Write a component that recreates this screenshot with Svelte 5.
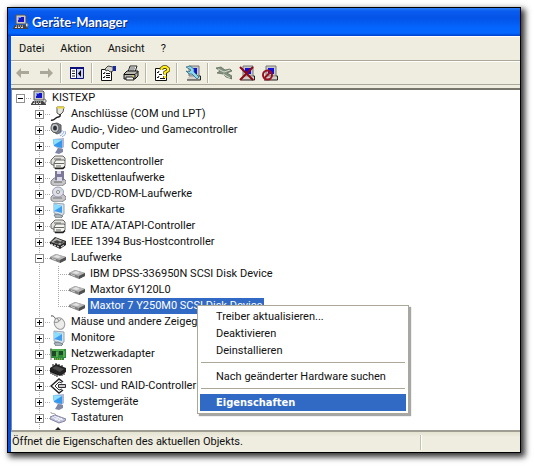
<script>
    const menus = ['Datei', 'Aktion', 'Ansicht', '?']
    const tools = [
        { icon: 'back', title: 'Zurück', disabled: true },
        { icon: 'forward', title: 'Vorwärts', disabled: true },
        null,
        { icon: 'pane', title: 'Konsolenstruktur' },
        null,
        { icon: 'properties', title: 'Eigenschaften' },
        { icon: 'print', title: 'Drucken' },
        null,
        { icon: 'help', title: 'Hilfe' },
        null,
        { icon: 'scan', title: 'Nach geänderter Hardware suchen' },
        null,
        { icon: 'update', title: 'Treiber aktualisieren' },
        { icon: 'uninstall', title: 'Deinstallieren' },
        { icon: 'disable', title: 'Deaktivieren' }
    ]
    const devices = [
        { name: 'Anschlüsse (COM und LPT)', icon: 'port' },
        { name: 'Audio-, Video- und Gamecontroller', icon: 'audio' },
        { name: 'Computer', icon: 'computer' },
        { name: 'Diskettencontroller', icon: 'controller' },
        { name: 'Diskettenlaufwerke', icon: 'floppy' },
        { name: 'DVD/CD-ROM-Laufwerke', icon: 'cdrom' },
        { name: 'Grafikkarte', icon: 'display' },
        { name: 'IDE ATA/ATAPI-Controller', icon: 'controller' },
        { name: 'IEEE 1394 Bus-Hostcontroller', icon: 'firewire' },
        {
            name: 'Laufwerke',
            icon: 'disk',
            children: ['IBM DPSS-336950N SCSI Disk Device', 'Maxtor 6Y120L0', 'Maxtor 7 Y250M0 SCSI Disk Device']
        },
        { name: 'Mäuse und andere Zeigegeräte', icon: 'mouse' },
        { name: 'Monitore', icon: 'display' },
        { name: 'Netzwerkadapter', icon: 'network' },
        { name: 'Prozessoren', icon: 'cpu' },
        { name: 'SCSI- und RAID-Controller', icon: 'scsi' },
        { name: 'Systemgeräte', icon: 'computer' },
        { name: 'Tastaturen', icon: 'keyboard' },
        { name: '', icon: 'usb' }
    ]
    const actions = [
        'Treiber aktualisieren...',
        'Deaktivieren',
        'Deinstallieren',
        null,
        'Nach geänderter Hardware suchen',
        null,
        'Eigenschaften'
    ]
    let open = $state({ KISTEXP: true, Laufwerke: true })
    let selected = $state('Maxtor 7 Y250M0 SCSI Disk Device')

    function toggle(name) {
        open[name] = !open[name]
    }
</script>

{#snippet pc()}
    <path d="M3 1h9l1 1v8H3z" fill="#c9c9c9" stroke="#555" />
    <path d="M5 3h6v5H5z" fill="#1414c8" />
    <path d="M5 3h3v1H6v2H5z" fill="#6d8bff" />
    <path d="M2 11h10l3 3v1H0v-1z" fill="#444" />
    <path d="M3 12h1m1 0h1m1 0h1m1 0h1M2 13.500h2m1 0h2m1 0h2" stroke="#ddd" />
    <path d="M13 9l2 1v2l-2 1" fill="#ddd" stroke="#777" />
{/snippet}

{#snippet monitor()}
    <path d="M4 1l10 1v10l-3 2-7-3z" fill="#d7e1e8" stroke="#93a4b2" />
    <path d="M4 2l8 2v7L4 9z" fill="#3e9df0" />
    <path d="M4 2l8 2-8 5z" fill="#8edcff" />
    <path d="M4 13l4-1 5 2-2 2H6z" fill="#aeb7bd" stroke="#76838d" />
{/snippet}

{#snippet toolPc()}
    <path d="M4 1h10v10H4z" fill="#c8c8c8" stroke="#777" />
    <path d="M6 3h6v6H6z" fill="#1010d8" />
    <path d="M3 12h12v3H2z" fill="#d4d0c8" />
    <path d="M2 15h13.500v-4H14" fill="none" stroke="#222" />
{/snippet}

{#snippet icon(name)}
    <svg class="icon" viewBox="0 0 16 16" width="16" height="16" aria-hidden="true">
        {#if name === 'pc'}
            {@render pc()}
        {:else if name === 'back'}
            <path d="M1 8l5-5v3h8v3H6v4z" fill="#aca899" />
        {:else if name === 'forward'}
            <path d="M15 8l-5-5v3H2v3h8v4z" fill="#aca899" />
        {:else if name === 'pane'}
            <path d="M1.500 2.500h13v11h-13z" fill="#fff" stroke="#10107c" />
            <path d="M1 2h14v2H1zM7 3h1v11H7z" fill="#10107c" />
            <path d="M3 6h3M3 8.500h3M3 11h3" stroke="#222" />
            <path d="M8 4h6v9H8z" fill="#c9d3ee" />
            <path d="M12 5v7l-3-3.500z" fill="#000" />
        {:else if name === 'properties'}
            <path d="M1.500 4.500h10v11h-10z" fill="#fff" stroke="#111" />
            <path d="M3 8l1 1 1-2M3 12l1 1 1-2M6 8.500h4M6 10.500h4M6 12.500h4" stroke="#111" fill="none" />
            <path d="M5 4l3-3 5 1v4l-3 1-2-2-2 1z" fill="#d2d2c8" stroke="#444" />
            <path d="M13 1h3v5h-3z" fill="#1a2aa0" />
        {:else if name === 'print'}
            <path d="M5 7l2-6h7l-2 6z" fill="#fff" stroke="#222" />
            <path d="M7 3h5M6.500 5h5" stroke="#555" />
            <path d="M1 9l3-3h11v5l-3 3H1z" fill="#b9b9b0" stroke="#111" />
            <path d="M1 9.500h11l3-3M12 10v4" stroke="#111" fill="none" />
            <path d="M3 12l7 0 1 3H3z" fill="#f6f6ee" stroke="#222" />
            <path d="M9 11h2" stroke="#e3cf38" />
        {:else if name === 'help'}
            <path d="M1.500 3.500h11v12h-11z" fill="#fff" stroke="#111" />
            <path d="M3 7l1 1 1-2M3 12l1 1 1-2M5 9.500h3M6 13.500h5" stroke="#111" fill="none" />
            <path d="M7.500 5V3.500L9.500 2h2.500l2 1.500v2l-3 2v2M11 11v2" stroke="#554a00" stroke-width="3.500" fill="none" />
            <path d="M7.500 5V3.500L9.500 2h2.500l2 1.500v2l-3 2v2M11 11v2" stroke="#ffee19" stroke-width="2" fill="none" />
        {:else if name === 'scan'}
            {@render toolPc()}
            <path d="M1 2l4-1 4 3v3l5 5-2 2-5-5H4L1 6l3 1 2-2z" fill="#8ed8ec" stroke="#226078" stroke-width=".7" />
        {:else if name === 'update'}
            <path d="M0 3l5-1 4 3 5-1 2 2-5 2 5 3v3l-6-2-3-3-6-1 3-2z" fill="#84917f" stroke="#586454" stroke-width=".7" />
            <path d="M2 4l6 3 6-2M7 9l7 4" stroke="#d1d8ca" fill="none" />
        {:else if name === 'uninstall'}
            {@render toolPc()}
            <path d="M1 2l13 13M14 2L1 15" stroke="#8d0815" stroke-width="2" />
        {:else if name === 'disable'}
            {@render toolPc()}
            <circle cx="5.500" cy="10" r="4.500" fill="none" stroke="#991021" stroke-width="2" />
            <path d="M2.500 13l6-6" stroke="#991021" stroke-width="2" />
        {:else if name === 'port'}
            <path d="M7 1l7 0-1 5-3 3-3-2z" fill="#e5e5dc" stroke="#555" />
            <path d="M7 1.500h7" stroke="#e5d43a" stroke-width="2" />
            <path d="M10 8c1 4-2 2-4 4s-3 3-5 2" stroke="#222" stroke-width="1.500" fill="none" />
        {:else if name === 'audio'}
            <path d="M2 2l5-1 4 2v7l-4 2-5-3z" fill="#7d8086" stroke="#555" />
            <ellipse cx="5" cy="6" rx="4" ry="4.500" fill="#c6cacf" stroke="#555" />
            <ellipse cx="5" cy="6" rx="2" ry="2.500" fill="#303238" />
            <path d="M9 12c2-1 3-2 3-4M10 14c2-1 4-3 4-5M12 15c2-1 4-3 4-6" stroke="#86a1e0" fill="none" />
        {:else if name === 'computer'}
            <path d="M3 1l11-1v9l-4 3-6-4z" fill="#aeb6d4" />
            <path d="M3 1l9 1v8L4 8z" fill="#3498ee" />
            <path d="M3 1l9 1-8 5z" fill="#8fe0fb" />
            <path d="M8 10l5 1v3l-4 2-4-1z" fill="#7f87a8" />
        {:else if name === 'controller'}
            <path d="M1 6l4-4h8l2 2v3L5 12l-4-2z" fill="#e3e3dc" stroke="#666" />
            <path d="M4 9l2-3h8l1 1v5l-2 2H4z" fill="#f5f5ef" stroke="#666" />
            <path d="M4 9.500h10M6 12h5M4 5h7" stroke="#666" />
            <path d="M5 14.500h8l2-2" stroke="#222" stroke-width="1.500" fill="none" />
        {:else if name === 'floppy'}
            <path d="M1 11l3-3h9l3 3v2l-4 3H4l-3-2z" fill="#c5c5c8" stroke="#85858b" />
            <path d="M5 1h9v9l-3 1-6-1z" fill="#7d7898" />
            <path d="M7 1h4v3H7zM7 7h5v4H7z" fill="#d8d8e6" />
            <path d="M4 12h8" stroke="#666" />
        {:else if name === 'cdrom'}
            <path d="M1 11l3-3h9l3 3v2l-4 3H4l-3-2z" fill="#c5c5c8" stroke="#85858b" />
            <ellipse cx="8" cy="6" rx="5.500" ry="5" fill="#dfdfea" stroke="#9d9db4" />
            <path d="M8 6l3-4 2 3z" fill="#bfdada" />
            <circle cx="8" cy="6" r="1.500" fill="#fff" stroke="#888" />
            <path d="M3 12h9" stroke="#777" />
        {:else if name === 'display'}
            {@render monitor()}
        {:else if name === 'firewire'}
            <path d="M0 8l5-5 11 4v4l-6 4-10-5z" fill="#292929" />
            <path d="M1 8l5-4 9 4-5 3z" fill="#b9b9b4" />
            <path d="M3 8l4-2 4 2-3 2zM10 8l2-1 2 1-3 2z" fill="#444" />
            <path d="M1 10l2 1m1 0l2 1m1 0l2 1m2 0l3-2" stroke="#eee" />
        {:else if name === 'disk'}
            <path d="M0 7l6-3 10 3v3l-6 3-10-4z" fill="#808080" />
            <path d="M0 7l6-3 10 3-6 3z" fill="#b5b5b5" />
            <path d="M3 7l4-2 4 2-3 1z" fill="#e4e4e4" />
            <path d="M10 10l6-3v3l-6 3z" fill="#505050" />
            <path d="M2 8.500l4 1.500" stroke="#ccc" />
        {:else if name === 'mouse'}
            <path d="M7 6C5 6 5 1 1 2" stroke="#444" fill="none" />
            <ellipse cx="9.500" cy="9.500" rx="5" ry="6" transform="rotate(-30 9.500 9.500)" fill="#ececea" stroke="#999" />
            <path d="M4 8c3 1 5 0 7-3M7 4l2 3" stroke="#888" fill="none" />
        {:else if name === 'network'}
            <path d="M0 3h16v9h-2v2H4v-2H1z" fill="#2f8a3a" />
            <path d="M2 5h4v5H2zM9 5h4v4H9z" fill="#1d4a22" />
            <path d="M2 4h12M7 6v5M14 5v6" stroke="#75d268" />
            <path d="M5 13h8" stroke="#d7c34a" stroke-dasharray="1 1" />
            <path d="M1 2v12" stroke="#777" />
        {:else if name === 'cpu'}
            <path d="M0 6l6-4 10 4v4l-6 4-10-4z" fill="#222" />
            <path d="M2 6l4-2 8 3-4 3z" fill="#4b4b4b" />
            <path d="M1 9v3m2-2v3m2-2v3m2-2v3m5-3v2m2-3v2M3 2v2m3-3v2m3-1v2m3-1v2" stroke="#111" />
        {:else if name === 'scsi'}
            <path d="M13 4L9 1 1 8l8 7 4-3" fill="none" stroke="#222" stroke-width="1.500" />
            <path d="M12 5L9 4 5 8l4 4 3-1" fill="none" stroke="#333" />
            <path d="M8.500 6.500h7v3h-7z" fill="#ccc" stroke="#333" />
        {:else if name === 'keyboard'}
            <path d="M0 7l5-2 11 4-1 2-6 2-9-4z" fill="#bfc1d8" stroke="#8284a1" />
            <path d="M2 7l8 4M4 6l9 4M8 11l4-3M5 10l4-3" stroke="#f4f4ff" />
            <path d="M6 5C4 2 1 5 1 2" stroke="#999" fill="none" />
        {:else if name === 'usb'}
            <path d="M8 1l3 3H5zM8 3v12" fill="#222" />
        {/if}
    </svg>
{/snippet}

{#snippet expander(name)}
    <button class="expander" aria-label={open[name] ? 'Reduzieren' : 'Erweitern'} onclick={() => toggle(name)}>
        <svg viewBox="0 0 7 7" width="7" height="7" aria-hidden="true">
            <path d={open[name] ? 'M1 3h5v1H1z' : 'M1 3h5v1H1zM3 1h1v5H3z'} />
        </svg>
    </button>
{/snippet}

<main>
    <div class="window">
        <header>
            {@render icon('pc')}
            <h1>Geräte-Manager</h1>
        </header>
        <div class="body">
            <nav>
                {#each menus as menu}
                    <button>{menu}</button>
                {/each}
            </nav>
            <div class="toolbar" role="toolbar" aria-label="Werkzeuge">
                {#each tools as tool}
                    {#if tool}
                        <button aria-label={tool.title} disabled={tool.disabled}>{@render icon(tool.icon)}</button>
                    {:else}
                        <span class="divider"></span>
                    {/if}
                {/each}
            </div>
            <div class="tree">
                <div class="row">
                    <span class="cell root">{@render expander('KISTEXP')}</span>
                    {@render icon('pc')}
                    <span class="label">KISTEXP</span>
                </div>
                {#if open.KISTEXP}
                    <ul>
                        {#each devices as device}
                            <li>
                                <div class="row">
                                    <span class="cell line">{@render expander(device.name)}</span>
                                    {@render icon(device.icon)}
                                    <span class="label">{device.name}</span>
                                </div>
                                {#if device.children && open[device.name]}
                                    <ul class="children">
                                        {#each device.children as child}
                                            <li class="row">
                                                <span class="cell line"></span>
                                                {@render icon('disk')}
                                                <div class="entry">
                                                    <button
                                                        class="label"
                                                        class:selected={selected === child}
                                                        onclick={() => (selected = child)}>{child}</button>
                                                    {#if selected === child}
                                                        <div class="context" role="menu">
                                                            {#each actions as action}
                                                                {#if action}
                                                                    <button role="menuitem" class:default={action === 'Eigenschaften'}>{action}</button>
                                                                {:else}
                                                                    <hr />
                                                                {/if}
                                                            {/each}
                                                        </div>
                                                    {/if}
                                                </div>
                                            </li>
                                        {/each}
                                    </ul>
                                {/if}
                            </li>
                        {/each}
                    </ul>
                {/if}
            </div>
            <footer>
                <span>Öffnet die Eigenschaften des aktuellen Objekts.</span>
                <span class="extra"></span>
            </footer>
        </div>
    </div>
</main>

<style>
    :global(body) {
        background: #fff;
    }
    main {
        height: 100vh;
        box-sizing: border-box;
        padding: 7px 13px 13px 7px;
        font-family: Roboto, sans-serif;
        font-size: 11px;
        line-height: 16px;
        color: #111;
    }
    button {
        font: inherit;
        color: inherit;
        border: none;
        background: none;
        padding: 0;
        white-space: nowrap;
    }
    ul {
        list-style: none;
        margin: 0;
        padding: 0 0 0 19px;
    }
    .icon {
        flex: none;
        display: block;
    }
    .window {
        height: 100%;
        box-sizing: border-box;
        display: flex;
        flex-direction: column;
        border: 1px solid #000;
        background: #0a50e0;
        box-shadow: 3px 3px 6px 1px rgba(0, 0, 0, 0.8);
    }
    header {
        display: flex;
        align-items: center;
        gap: 3px;
        height: 28px;
        padding-left: 5px;
        background: linear-gradient(#2a7cf4, #0a5cf0 3px, #0353e6 10px, #0466ff 20px, #0467ff 25px, #0040c8);
    }
    header h1 {
        margin: 0;
        font: bold 13px/20px Lato, sans-serif;
        color: #fff;
        text-shadow: 1px 1px 0 #0a2a80;
    }
    .body {
        flex: 1;
        min-height: 0;
        display: flex;
        flex-direction: column;
        margin-left: 3px;
        background: #eeeddf;
    }
    nav {
        display: flex;
        height: 23px;
        border-top: 1px solid #fff;
        border-bottom: 1px solid #aca899;
    }
    nav button {
        padding: 0 8px;
    }
    .toolbar {
        display: flex;
        height: 22px;
        border-top: 1px solid #fff;
        border-bottom: 1px solid #aca899;
    }
    .toolbar button {
        display: flex;
        align-items: center;
        justify-content: center;
        width: 23px;
    }
    .divider {
        width: 1px;
        margin: 1px 3px;
        background: #b9b6a4;
        border-right: 1px solid #fff;
    }
    .tree {
        flex: 1;
        min-height: 0;
        overflow: hidden;
        margin-top: 3px;
        border-top: 2px solid #77756c;
        border-left: 1px solid #8c8a80;
        background: #fff;
    }
    .row {
        display: flex;
        height: 16px;
    }
    .cell {
        flex: none;
        display: flex;
        align-items: center;
        box-sizing: border-box;
        width: 19px;
        padding-left: 4px;
    }
    .root {
        background: repeating-linear-gradient(90deg, #aaa 0 1px, transparent 1px 2px) 8px 8px / 11px 1px no-repeat;
    }
    .line {
        background:
            repeating-linear-gradient(90deg, #aaa 0 1px, transparent 1px 2px) 8px 8px / 11px 1px no-repeat,
            repeating-linear-gradient(#aaa 0 1px, transparent 1px 2px) 8px 0 / 1px 16px no-repeat;
    }
    .children {
        background: repeating-linear-gradient(#aaa 0 1px, transparent 1px 2px) 8px 0 / 1px 100% no-repeat;
    }
    .children li:last-child .line {
        background-size: 11px 1px, 1px 8px;
    }
    .expander {
        display: block;
        box-sizing: border-box;
        width: 9px;
        height: 9px;
        border: 1px solid #919191;
        background: #fff;
    }
    .expander svg {
        display: block;
    }
    .label {
        margin-left: 3px;
        padding: 0 2px;
        white-space: nowrap;
    }
    .entry {
        position: relative;
    }
    .entry .label {
        display: block;
        height: 16px;
    }
    .selected {
        background: #316ac5;
        color: #fff;
    }
    .context {
        position: absolute;
        z-index: 1;
        left: 112px;
        top: 7px;
        display: flex;
        flex-direction: column;
        box-sizing: border-box;
        min-width: 212px;
        padding: 2px;
        border: 1px solid #aca899;
        background: #fff;
        box-shadow: 2px 2px 1px rgba(0, 0, 0, 0.35);
    }
    .context button {
        padding: 0 16px;
        line-height: 17px;
        text-align: left;
    }
    .context .default {
        background: #316ac5;
        color: #fff;
        font-family: "DejaVu Sans Condensed", sans-serif;
        font-weight: bold;
    }
    .context hr {
        height: 1px;
        margin: 3px 1px 5px;
        border: none;
        background: #aca899;
    }
    footer {
        display: flex;
        height: 20px;
        border-top: 2px solid #a09e94;
        background: linear-gradient(#e4e2d0, #eeeddf 5px);
        line-height: 20px;
    }
    footer > span {
        flex: 1;
        padding-left: 1px;
        white-space: nowrap;
    }
    footer .extra {
        flex: none;
        width: 98px;
        margin: 3px 0 2px;
        border-left: 1px solid #c5c2b0;
        box-shadow: inset 1px 0 #fff;
    }
</style>
